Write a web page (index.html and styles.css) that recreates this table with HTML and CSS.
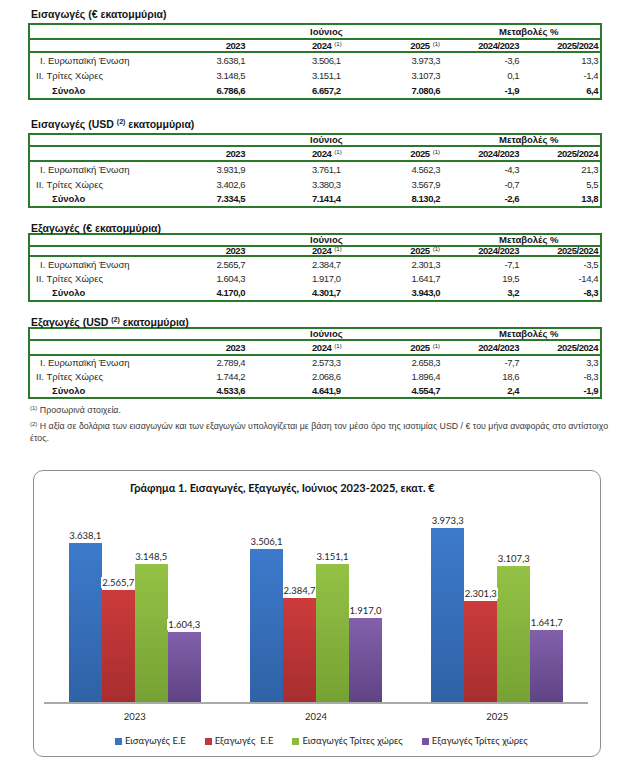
FILE: index.html
```html
<!DOCTYPE html>
<html lang="el">
<head>
<meta charset="utf-8">
<link rel="stylesheet" href="styles.css">
</head>
<body>
<div class="page">

  <section class="sec s1">
    <h2 class="sec-title">Εισαγωγές (€ εκατομμύρια)</h2>
    <div class="tbl">
      <div class="row hd1"><span></span><span></span><span class="c-iou">Ιούνιος</span><span></span><span class="c-met">Μεταβολές %</span></div>
      <div class="row hd2"><span></span><span class="num">2023</span><span class="c24">2024<sup class="sup">(1)</sup></span><span class="num">2025<sup class="sup">(1)</sup></span><span class="num">2024/2023</span><span class="num">2025/2024</span></div>
      <div class="tbody">
        <div class="row d"><span class="lab l1">I. Ευρωπαϊκή Ένωση</span><span class="num">3.638,1</span><span class="c24">3.506,1</span><span class="num">3.973,3</span><span class="num">-3,6</span><span class="num">13,3</span></div>
        <div class="row d"><span class="lab l2">II. Τρίτες Χώρες</span><span class="num">3.148,5</span><span class="c24">3.151,1</span><span class="num">3.107,3</span><span class="num">0,1</span><span class="num">-1,4</span></div>
        <div class="row d tot"><span class="lab l3">Σύνολο</span><span class="num">6.786,6</span><span class="c24">6.657,2</span><span class="num">7.080,6</span><span class="num">-1,9</span><span class="num">6,4</span></div>
      </div>
    </div>
  </section>

  <section class="sec s2">
    <h2 class="sec-title">Εισαγωγές (USD <sup class="sup">(2)</sup> εκατομμύρια)</h2>
    <div class="tbl">
      <div class="row hd1"><span></span><span></span><span class="c-iou">Ιούνιος</span><span></span><span class="c-met">Μεταβολές %</span></div>
      <div class="row hd2"><span></span><span class="num">2023</span><span class="c24">2024<sup class="sup">(1)</sup></span><span class="num">2025<sup class="sup">(1)</sup></span><span class="num">2024/2023</span><span class="num">2025/2024</span></div>
      <div class="tbody">
        <div class="row d"><span class="lab l1">I. Ευρωπαϊκή Ένωση</span><span class="num">3.931,9</span><span class="c24">3.761,1</span><span class="num">4.562,3</span><span class="num">-4,3</span><span class="num">21,3</span></div>
        <div class="row d"><span class="lab l2">II. Τρίτες Χώρες</span><span class="num">3.402,6</span><span class="c24">3.380,3</span><span class="num">3.567,9</span><span class="num">-0,7</span><span class="num">5,5</span></div>
        <div class="row d tot"><span class="lab l3">Σύνολο</span><span class="num">7.334,5</span><span class="c24">7.141,4</span><span class="num">8.130,2</span><span class="num">-2,6</span><span class="num">13,8</span></div>
      </div>
    </div>
  </section>

  <section class="sec s3">
    <h2 class="sec-title">Εξαγωγές (€ εκατομμύρια)</h2>
    <div class="tbl">
      <div class="row hd1"><span></span><span></span><span class="c-iou">Ιούνιος</span><span></span><span class="c-met">Μεταβολές %</span></div>
      <div class="row hd2"><span></span><span class="num">2023</span><span class="c24">2024<sup class="sup">(1)</sup></span><span class="num">2025<sup class="sup">(1)</sup></span><span class="num">2024/2023</span><span class="num">2025/2024</span></div>
      <div class="tbody">
        <div class="row d"><span class="lab l1">I. Ευρωπαϊκή Ένωση</span><span class="num">2.565,7</span><span class="c24">2.384,7</span><span class="num">2.301,3</span><span class="num">-7,1</span><span class="num">-3,5</span></div>
        <div class="row d"><span class="lab l2">II. Τρίτες Χώρες</span><span class="num">1.604,3</span><span class="c24">1.917,0</span><span class="num">1.641,7</span><span class="num">19,5</span><span class="num">-14,4</span></div>
        <div class="row d tot"><span class="lab l3">Σύνολο</span><span class="num">4.170,0</span><span class="c24">4.301,7</span><span class="num">3.943,0</span><span class="num">3,2</span><span class="num">-8,3</span></div>
      </div>
    </div>
  </section>

  <section class="sec s4">
    <h2 class="sec-title">Εξαγωγές (USD <sup class="sup">(2)</sup> εκατομμύρια)</h2>
    <div class="tbl">
      <div class="row hd1"><span></span><span></span><span class="c-iou">Ιούνιος</span><span></span><span class="c-met">Μεταβολές %</span></div>
      <div class="row hd2"><span></span><span class="num">2023</span><span class="c24">2024<sup class="sup">(1)</sup></span><span class="num">2025<sup class="sup">(1)</sup></span><span class="num">2024/2023</span><span class="num">2025/2024</span></div>
      <div class="tbody">
        <div class="row d"><span class="lab l1">I. Ευρωπαϊκή Ένωση</span><span class="num">2.789,4</span><span class="c24">2.573,3</span><span class="num">2.658,3</span><span class="num">-7,7</span><span class="num">3,3</span></div>
        <div class="row d"><span class="lab l2">II. Τρίτες Χώρες</span><span class="num">1.744,2</span><span class="c24">2.068,6</span><span class="num">1.896,4</span><span class="num">18,6</span><span class="num">-8,3</span></div>
        <div class="row d tot"><span class="lab l3">Σύνολο</span><span class="num">4.533,6</span><span class="c24">4.641,9</span><span class="num">4.554,7</span><span class="num">2,4</span><span class="num">-1,9</span></div>
      </div>
    </div>
  </section>

  <div class="notes">
    <p class="note n1"><sup class="nsup">(1)</sup> Προσωρινά στοιχεία.</p>
    <p class="note n2"><span class="nl"><sup class="nsup">(2)</sup> Η αξία σε δολάρια των εισαγωγών και των εξαγωγών υπολογίζεται με βάση τον μέσο όρο της ισοτιμίας USD / € του μήνα αναφοράς στο αντίστοιχο</span><span class="nl">έτος.</span></p>
  </div>

  <div class="chart">
    <div class="ch-title">Γράφημα 1. Εισαγωγές, Εξαγωγές, Ιούνιος 2023-2025, εκατ. €</div>
    <div class="plot">
      <div class="grp">
        <div class="bw"><span class="val">3.638,1</span><div class="bar blue" style="height:159px"></div></div>
        <div class="bw"><span class="val">2.565,7</span><div class="bar red" style="height:112px"></div></div>
        <div class="bw"><span class="val">3.148,5</span><div class="bar green" style="height:138px"></div></div>
        <div class="bw"><span class="val">1.604,3</span><div class="bar purple" style="height:70px"></div></div>
      </div>
      <div class="grp">
        <div class="bw"><span class="val">3.506,1</span><div class="bar blue" style="height:153px"></div></div>
        <div class="bw"><span class="val">2.384,7</span><div class="bar red" style="height:104px"></div></div>
        <div class="bw"><span class="val">3.151,1</span><div class="bar green" style="height:138px"></div></div>
        <div class="bw"><span class="val">1.917,0</span><div class="bar purple" style="height:84px"></div></div>
      </div>
      <div class="grp">
        <div class="bw"><span class="val">3.973,3</span><div class="bar blue" style="height:174px"></div></div>
        <div class="bw"><span class="val">2.301,3</span><div class="bar red" style="height:101px"></div></div>
        <div class="bw"><span class="val">3.107,3</span><div class="bar green" style="height:136px"></div></div>
        <div class="bw"><span class="val">1.641,7</span><div class="bar purple" style="height:72px"></div></div>
      </div>
    </div>
    <div class="xlabs"><span>2023</span><span>2024</span><span>2025</span></div>
    <div class="legend">
      <span class="lg"><i class="sw blue"></i>Εισαγωγές Ε.Ε</span>
      <span class="lg"><i class="sw red"></i>Εξαγωγές&nbsp; Ε.Ε</span>
      <span class="lg"><i class="sw green"></i>Εισαγωγές Τρίτες χώρες</span>
      <span class="lg"><i class="sw purple"></i>Εξαγωγές Τρίτες χώρες</span>
    </div>
  </div>

</div>
</body>
</html>
```
FILE: styles.css
```css
* { box-sizing: border-box; margin: 0; padding: 0; }
body { margin: 0; background: #fff; font-family: "Liberation Sans", Arial, sans-serif; color: #1f1f1f; }
.page { width: 623px; padding: 8px 0 0 28px; }

.sec-title { font-size: 10.5px; font-weight: bold; line-height: 13px; height: 13px; color: #151515; padding-left: 3px; margin-bottom: 2px; white-space: nowrap; }
.s2 { margin-top: 18px; }
.s3 { margin-top: 14px; }
.s4 { margin-top: 14px; }
.s3 .sec-title, .s4 .sec-title { margin-bottom: -2px; }

.tbl { width: 574px; border: 2px solid #2b7a2b; }
.row { display: grid; grid-template-columns: 170px 45px 155px 40px 79px 79px; padding-right: 2px; font-size: 9.5px; white-space: nowrap; }
.hd1, .hd2 { font-weight: bold; color: #151515; border-bottom: 2px solid #2b7a2b; }
.s1 .hd1 { height: 15px; line-height: 13px; }
.s1 .hd2 { height: 13px; line-height: 11px; }
.s1 .tbody { height: 45px; }
.s2 .hd1 { height: 12px; line-height: 10px; }
.s2 .hd2 { height: 15px; line-height: 13px; }
.s2 .tbody { height: 44px; }
.s3 .hd1 { height: 12px; line-height: 10px; }
.s3 .hd2 { height: 10px; line-height: 8px; }
.s3 .tbody { height: 43px; }
.s4 .hd1 { height: 12px; line-height: 10px; }
.s4 .hd2 { height: 15px; line-height: 13px; }
.s4 .tbody { height: 41px; }

.tbody { display: flex; flex-direction: column; }
.row.d { flex: 1; align-items: center; color: #2a2a2a; }
.row.tot { font-weight: bold; color: #151515; }
.num, .c24 { letter-spacing: -0.45px; }
.num { text-align: right; }
.c24 { padding-left: 67px; }
.c-iou { padding-left: 65px; }
.c-met { grid-column: 5 / 7; padding-left: 59px; }
.lab.l1 { padding-left: 10px; }
.lab.l2 { padding-left: 6px; }
.lab.l3 { padding-left: 22px; }
.sup { font-size: 6px; vertical-align: 3px; line-height: 0; margin-left: 3px; font-weight: normal; letter-spacing: 0; }
.sec-title .sup { font-size: 7px; vertical-align: 4px; margin-left: 0; font-weight: bold; }

.notes { margin-top: 5px; padding-left: 2px; width: 592px; font-size: 8.8px; line-height: 12px; color: #3a3a3a; }
.n2 { margin-top: 4px; }
.nl { display: block; white-space: nowrap; }
.nsup { font-size: 6px; line-height: 1; vertical-align: baseline; position: relative; top: -3px; }

.chart { margin: 26px 0 0 5px; width: 568px; border: 1px solid #8e8e8e; border-radius: 10px; font-family: Lato, "Open Sans", sans-serif; color: #1f1f1f; }
.ch-title { padding: 9px 0 0 96px; height: 25px; line-height: 16px; font-size: 11px; font-weight: bold; white-space: nowrap; color: #111; }
.plot { margin: 0 12px 0 10px; height: 208px; display: grid; grid-template-columns: repeat(3, 1fr); border-bottom: 2px solid #a9a9a9; }
.grp { display: flex; justify-content: center; align-items: flex-end; }
.bw { width: 33px; display: flex; flex-direction: column; align-items: center; }
.val { font-size: 9.5px; line-height: 11px; margin-bottom: 2px; padding: 0 1px; background: #fff; white-space: nowrap; position: relative; z-index: 1; }
.bar { width: 33px; }
.bar.blue { background: linear-gradient(to bottom, #3d7acb, #2f62a6); }
.bar.red { background: linear-gradient(to bottom, #cc3b3c, #a82d2f); }
.bar.green { background: linear-gradient(to bottom, #93c246, #76a233); }
.bar.purple { background: linear-gradient(to bottom, #8260ab, #5f4485); }
.xlabs { margin: 0 12px 0 10px; display: grid; grid-template-columns: repeat(3, 1fr); height: 26px; line-height: 26px; text-align: center; font-size: 9.5px; }
.legend { display: flex; gap: 19px; padding-left: 81px; margin-top: 2px; height: 18px; line-height: 18px; font-size: 9.5px; margin-bottom: 6px; }
.lg { display: flex; align-items: center; white-space: nowrap; }
.sw { display: inline-block; width: 7px; height: 7px; margin-right: 3px; }
.sw.blue { background: #3a73c2; }
.sw.red { background: #c0373a; }
.sw.green { background: #8cbb40; }
.sw.purple { background: #7753a1; }
```
